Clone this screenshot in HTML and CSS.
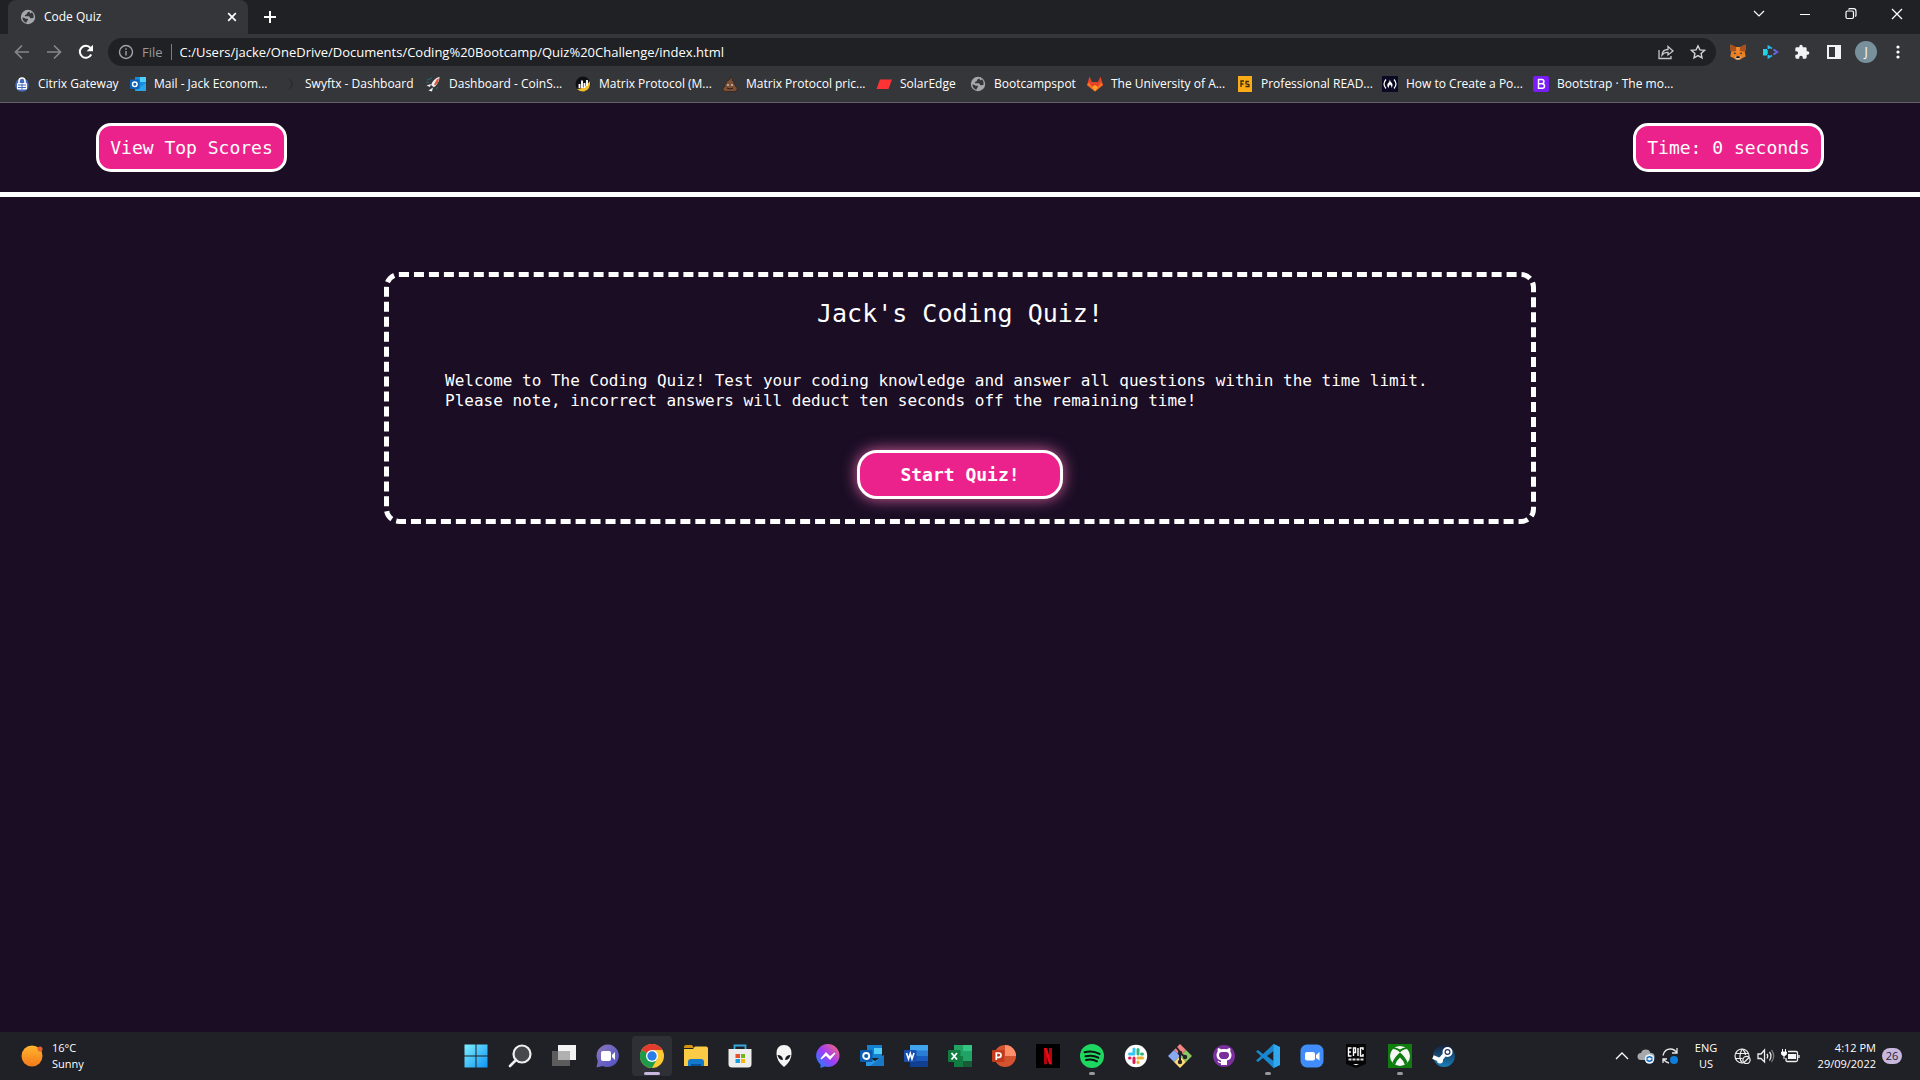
FILE: index.html
```html
<!DOCTYPE html>
<html lang="en">
<head>
<meta charset="utf-8">
<title>Code Quiz</title>
<link rel="stylesheet" href="styles.css">
</head>
<body>
<svg class="defs" width="0" height="0" aria-hidden="true">
  <defs>
    <linearGradient id="gWin" x1="0" y1="0" x2="1" y2="1"><stop offset="0" stop-color="#7ff0ff"/><stop offset="1" stop-color="#0d92f5"/></linearGradient>
    <linearGradient id="gChat" x1="0" y1="0" x2="1" y2="1"><stop offset="0" stop-color="#8f78b8"/><stop offset="1" stop-color="#4b50c8"/></linearGradient>
    <linearGradient id="gMsg" x1="0" y1="1" x2="1" y2="0"><stop offset="0" stop-color="#0a8bff"/><stop offset=".5" stop-color="#a03cf8"/><stop offset="1" stop-color="#ff6a6a"/></linearGradient>
    <linearGradient id="gSteam" x1="0" y1="0" x2="0" y2="1"><stop offset="0" stop-color="#16203c"/><stop offset="1" stop-color="#1a7fb8"/></linearGradient>
    <linearGradient id="gDash" x1="0" y1="0" x2="1" y2="0"><stop offset="0" stop-color="#22c8f0"/><stop offset="1" stop-color="#7a4ff0"/></linearGradient>
    <linearGradient id="gSun" x1="0" y1="0" x2="0" y2="1"><stop offset="0" stop-color="#ffb62e"/><stop offset="1" stop-color="#f47a1c"/></linearGradient>
    <symbol id="globe" viewBox="0 0 16 16"><circle cx="8" cy="8" r="7.200" fill="#a4a8ac"/><path d="M9.500 2.500q-2.500.5-2.500 2 0 1-1.500 1.200Q4.500 6 5 7.200h3.500q1.500.3 1.500 1.800 2 .5 3.800-.5Q14.200 5 12 3.200q-1 1.300-2 1z" fill="#35363a"/><path d="M2.300 8.500q2.200 0 3.200 1.300h2.300q.7.800-.3 1.700-1 .7-1 2.300Q3 13 2.300 8.500z" fill="#35363a"/></symbol>
  </defs>
</svg>

<header class="browser">
  <div class="tabstrip">
    <div class="tab">
      <svg class="fav" viewBox="0 0 16 16"><use href="#globe"/></svg>
      <span class="tab-title">Code Quiz</span>
      <button class="icon-btn tab-close" aria-label="Close tab"><svg width="10" height="10" viewBox="0 0 10 10"><path d="M1.200 1.200l7.600 7.600M8.800 1.200L1.200 8.800" stroke="#fff" stroke-width="1.700"/></svg></button>
    </div>
    <button class="icon-btn new-tab" aria-label="New tab"><svg width="14" height="14" viewBox="0 0 14 14"><path d="M7 1v12M1 7h12" stroke="#fff" stroke-width="2"/></svg></button>
    <div class="win-controls">
      <button class="icon-btn" aria-label="Search tabs"><svg width="12" height="8" viewBox="0 0 12 8"><path d="M1 1l5 5 5-5" fill="none" stroke="#fff" stroke-width="1.200"/></svg></button>
      <button class="icon-btn" aria-label="Minimise"><svg width="10" height="10" viewBox="0 0 10 10"><path d="M0 5.500h10" stroke="#fff"/></svg></button>
      <button class="icon-btn" aria-label="Restore"><svg width="12" height="12" viewBox="0 0 12 12" fill="none" stroke="#fff" stroke-width="1.200"><rect x="1" y="3" width="7.500" height="7.500" rx="1.500"/><path d="M3.500 1.500q.5-.8 1.500-.8h3.500Q11 .7 11 3.200V7q0 1-.8 1.500"/></svg></button>
      <button class="icon-btn" aria-label="Close"><svg width="12" height="12" viewBox="0 0 12 12"><path d="M1 1l10 10M11 1L1 11" stroke="#fff" stroke-width="1.300"/></svg></button>
    </div>
  </div>

  <div class="toolbar">
    <nav class="nav-btns">
      <button class="icon-btn" aria-label="Back"><svg width="16" height="16" viewBox="0 0 16 16" fill="none" stroke="#85878b" stroke-width="1.700"><path d="M15 8H2M8 1.500L1.500 8 8 14.500"/></svg></button>
      <button class="icon-btn" aria-label="Forward"><svg width="16" height="16" viewBox="0 0 16 16" fill="none" stroke="#85878b" stroke-width="1.700"><path d="M1 8h13M8 1.500L14.500 8 8 14.500"/></svg></button>
      <button class="icon-btn" aria-label="Reload"><svg width="16" height="16" viewBox="0 0 16 16"><path d="M13.200 10.500A6 6 0 1 1 12.500 4" fill="none" stroke="#fff" stroke-width="2"/><path d="M15 .8v6.400H8.600z" fill="#fff"/></svg></button>
    </nav>
    <div class="omnibox">
      <svg width="16" height="16" viewBox="0 0 16 16" fill="none" stroke="#a0a3a7" stroke-width="1.400"><circle cx="8" cy="8" r="6.500"/><path d="M8 7v4.500M8 4.300v1.500"/></svg>
      <label class="scheme" for="address">File</label>
      <input id="address" class="address" type="text" value="C:/Users/jacke/OneDrive/Documents/Coding%20Bootcamp/Quiz%20Challenge/index.html">
      <button class="icon-btn" aria-label="Share"><svg width="16" height="16" viewBox="0 0 16 16" fill="none" stroke="#c6c8cb" stroke-width="1.300"><path d="M1 6v8.500h12V12M4 11c.3-3.500 2.500-5.500 6-5.500V2.500L15 7l-5 4V8.300C7.500 8.200 5.500 9 4 11z"/></svg></button>
      <button class="icon-btn" aria-label="Bookmark"><svg width="16" height="16" viewBox="0 0 16 16"><path d="M8 1.800l1.900 4.100 4.500.5-3.300 3 .9 4.400L8 11.600l-4 2.200.9-4.400-3.300-3 4.500-.5z" fill="none" stroke="#d0d2d5" stroke-width="1.400"/></svg></button>
    </div>
    <div class="extensions">
      <button class="icon-btn" aria-label="MetaMask"><svg width="16" height="16" viewBox="0 0 16 16"><path d="M.5.500L5.500 3h5l5-2.500V6l-.7 2 .9 4.500-3.200 1.500-2.500 1.700H6L3.500 14 .3 12.500 1.200 8 .5 6z" fill="#ea8022"/><path d="M.5.500L6 3l.5 4-4.800.5L.5 6zM15.500.5L10 3l-.5 4 4.800.5L15.500 6z" fill="#a8501e"/><path d="M6 3h4l-.8 6H6.800z" fill="#f08a2a"/><path d="M3.800 8.300l2.700 1.200-2 .8zM12.200 8.300L9.500 9.500l2 .8z" fill="#233447"/><path d="M5 12.500l1.500 3h3l1.500-3z" fill="#d7c1b3"/><path d="M6.500 12.300h3l.3 1.700H6.200z" fill="#161616"/></svg></button>
      <button class="icon-btn" aria-label="Extension"><svg width="17" height="14" viewBox="0 0 17 14"><rect x="1" y="4" width="4" height="6.500" fill="#22d3e8"/><path d="M6.500 4V1.500L10 3.500M11.500 4.500L15.500 7l-4 2.500M10 10.500l-3.500 2V10" fill="none" stroke="url(#gDash)" stroke-width="1.800"/><path d="M5.500 5v4" stroke="#3a9cf0"/></svg></button>
      <button class="icon-btn" aria-label="Extensions"><svg width="16" height="16" viewBox="0 0 24 24"><path d="M20.500 11H19V7a2 2 0 0 0-2-2h-4V3.500a2.500 2.500 0 0 0-5 0V5H4a2 2 0 0 0-2 2v3.800h1.500a2.700 2.700 0 0 1 0 5.400H2V20a2 2 0 0 0 2 2h3.800v-1.500a2.700 2.700 0 0 1 5.400 0V22H17a2 2 0 0 0 2-2v-4h1.500a2.500 2.500 0 0 0 0-5z" fill="#f1f3f4"/></svg></button>
      <button class="icon-btn" aria-label="Side panel"><svg width="14" height="14" viewBox="0 0 14 14"><path d="M0 0h14v14H0zM2 2v10h6V2z" fill="#f1f3f4" fill-rule="evenodd"/></svg></button>
      <button class="icon-btn avatar" aria-label="Profile">J</button>
      <button class="icon-btn" aria-label="Menu"><svg width="4" height="14" viewBox="0 0 4 14" fill="#fff"><circle cx="2" cy="2" r="1.600"/><circle cx="2" cy="7" r="1.600"/><circle cx="2" cy="12" r="1.600"/></svg></button>
    </div>
  </div>

  <nav class="bookmarks">
    <a href="#"><svg class="fav" viewBox="0 0 16 16"><circle cx="8" cy="9" r="6.800" fill="#4668b8"/><path d="M5 7V5a3 3 0 0 1 6 0v2" fill="none" stroke="#fff" stroke-width="1.600"/><rect x="3" y="7" width="10" height="6.500" rx="1" fill="#fff"/><path d="M4 9h8M4 11.500h8M8 7.500v6" stroke="#4668b8"/></svg>Citrix Gateway</a>
    <a href="#"><svg class="fav" viewBox="0 0 16 16"><path d="M5 1h11v14H5z" fill="#1590df"/><path d="M10 1h6v5h-6z" fill="#50d0ff"/><path d="M16 7v8H5z" fill="#2ba5ea"/><rect y="3.500" width="9.500" height="9.500" rx="1" fill="#0a63b8"/><circle cx="4.800" cy="8.200" r="2.300" fill="none" stroke="#fff" stroke-width="1.500"/></svg>Mail - Jack Econom...</a>
    <a href="#"><svg class="fav" viewBox="0 0 16 16"><path d="M7 2q5 2 5 6t-5 6q3-3 3-6T7 2z" fill="#2b2d33"/></svg>Swyftx - Dashboard</a>
    <a href="#"><svg class="fav" viewBox="0 0 16 16"><path d="M2 4l5-2M1 7l3-1M11 13l2-2" stroke="#256a78"/><path d="M14.500.8Q8 3 6 9l3 2.200Q14.500 7 14.500.8z" fill="#eceff2"/><path d="M12 3l2-.5-1 4-3 3-1-1z" fill="#de5330"/><path d="M6 8L1.500 9.500 5 11zM8 11.500L7 15.500 3.500 14.500z" fill="#f2f2f2"/></svg>Dashboard - CoinS...</a>
    <a href="#"><svg class="fav" viewBox="0 0 16 16"><circle cx="8" cy="8" r="7.500" fill="#0d0f12"/><path d="M2 13Q9 13 15 5q1 9-6 10.500Q5 16 2 13z" fill="#f0bf2b"/><path d="M4.500 8v4M7 4.500V12M9.500 7v5M12 4v6" stroke="#fff" stroke-width="1.900"/></svg>Matrix Protocol (M...</a>
    <a href="#"><svg class="fav" viewBox="0 0 16 16"><path d="M8.500.5q2.500 2 1.500 4 2.500.5 2 3.500 2 .5 1.500 2.500 2.500 1 1.500 3.500-.5 1.500-3 1.500H3.500Q.5 15.500.8 13q.2-2 2.200-2.500-.8-2 1-3Q4 5 6.500 4.500 9 3 8.500.5z" fill="#7c5138" stroke="#302019" stroke-width=".7"/><circle cx="6" cy="9" r=".9" fill="#ccc"/><circle cx="10" cy="9" r=".9" fill="#ccc"/><path d="M5 12q3 2 6 0" fill="none" stroke="#2c1c14"/></svg>Matrix Protocol pric...</a>
    <a href="#"><svg class="fav" viewBox="0 0 16 16"><path d="M4 3.500h12L12.500 13H.5z" fill="#ff3333"/></svg>SolarEdge</a>
    <a href="#"><svg class="fav" viewBox="0 0 16 16"><use href="#globe"/></svg>Bootcampspot</a>
    <a href="#"><svg class="fav" viewBox="0 0 16 16"><path d="M2.500.5L5 6h6l2.500-5.500L16 9l-8 6.500L0 9z" fill="#e24329"/><path d="M0 9l2-3 6 9.500L14 6l2 3-8 6.500z" fill="#fc6d26"/><path d="M5 11l3-2 3 2-3 4.500z" fill="#fca326"/></svg>The University of A...</a>
    <a href="#"><svg class="fav" viewBox="0 0 16 16"><path d="M1 0h14v16H1z" fill="#fbab18"/><path d="M4 11V5h3M4 8h2.500M12 5.500H9v2.300l3 .7v2H8.500" fill="none" stroke="#3c2c0c" stroke-width="1.300"/></svg>Professional READ...</a>
    <a href="#"><svg class="fav" viewBox="0 0 16 16"><path d="M0 0h16v16H0z" fill="#0a0a23"/><path d="M4 3.500q-4 4.500 0 9M12 3.500q4 4.500 0 9" fill="none" stroke="#fff" stroke-width="1.200"/><path d="M8 3.500q0 2 1.800 3.500 1.700 2.500-.5 5Q10 9.500 8 8.500q-1.500 1-1.200 3.500-2.500-2-1-4.500Q7.500 6 8 3.500z" fill="#fff"/></svg>How to Create a Po...</a>
    <a href="#"><svg class="fav" viewBox="0 0 16 16"><rect width="16" height="16" rx="2" fill="#7a1cf5"/><path d="M5.500 3.500h3.300a2 2 0 0 1 0 4.200H5.500zM5.500 7.700h3.700a2.300 2.300 0 0 1 0 4.600H5.500z" fill="none" stroke="#fff" stroke-width="1.500"/></svg>Bootstrap · The mo...</a>
  </nav>
</header>

<main class="page">
  <div class="quiz-bar">
    <button class="pill">View Top Scores</button>
    <div class="pill">Time: 0 seconds</div>
  </div>
  <section class="quiz-card">
    <h1>Jack's Coding Quiz!</h1>
    <p>Welcome to The Coding Quiz! Test your coding knowledge and answer all questions within the time limit. Please note, incorrect answers will deduct ten seconds off the remaining time!</p>
    <button class="pill start">Start Quiz!</button>
  </section>
</main>

<footer class="taskbar">
  <div class="weather">
    <svg width="24" height="24" viewBox="0 0 24 24"><circle cx="12" cy="12" r="10.500" fill="url(#gSun)"/><circle cx="20" cy="5" r="2.500" fill="#e8622a"/></svg>
    <div><div>16°C</div><div>Sunny</div></div>
  </div>
  <div class="apps">
    <button aria-label="Start"><svg viewBox="0 0 24 24" fill="url(#gWin)"><path d="M.5.500h11v11H.5zM12.500.5h11v11h-11zM.5 12.500h11v11H.5zM12.500 12.500h11v11h-11z"/></svg></button>
    <button aria-label="Search"><svg viewBox="0 0 24 24"><circle cx="14" cy="10" r="8.500" fill="#46484c" stroke="#f0f0f0" stroke-width="2.200"/><path d="M8 16l-6 6" stroke="#f0f0f0" stroke-width="2.600" stroke-linecap="round"/></svg></button>
    <button aria-label="Task view"><svg viewBox="0 0 24 24"><path d="M6 1h18v15H6z" fill="#f3f3f3"/><path d="M0 7h18v15H0z" fill="#5c5c5c"/><path d="M6 7h12v9H6z" fill="#b0b0b0"/></svg></button>
    <button aria-label="Chat"><svg viewBox="0 0 24 24"><path d="M12 .5a11.300 11.300 0 1 1-5.500 21.400L.5 23.500 1.800 17A11.300 11.300 0 0 1 12 .5z" fill="url(#gChat)"/><rect x="5" y="7" width="10" height="10" rx="2" fill="#fff"/><path d="M16 11l3-3v8l-3-3z" fill="#fff"/></svg></button>
    <button class="active" aria-label="Chrome"><svg viewBox="0 0 24 24"><circle cx="12" cy="12" r="12" fill="#fcc934"/><path d="M12 12L1.600 6A12 12 0 0 1 22.400 6z" fill="#e33b2e"/><path d="M12 12L1.600 6A12 12 0 0 0 12 24l5-9z" fill="#1e9a4b"/><path d="M12 6h10.400L17.200 15z" fill="#fcc934"/><circle cx="12" cy="12" r="6" fill="#fff"/><circle cx="12" cy="12" r="4.700" fill="#2a7de9"/></svg></button>
    <button aria-label="File Explorer"><svg viewBox="0 0 24 24"><path d="M0 3q0-2 2-2h6l2 3H0z" fill="#d4930e"/><path d="M0 5h9l2-2.500h11q2 0 2 2V22H0z" fill="#fccb45"/><path d="M4 22v-4q0-3 3-3h10q3 0 3 3v4z" fill="#1478cc"/><path d="M7 20h10v2H7z" fill="#0a5299"/></svg></button>
    <button aria-label="Microsoft Store"><svg viewBox="0 0 24 24"><path d="M6.500 6V1.500h11V6" fill="none" stroke="#35a9e0" stroke-width="1.800"/><path d="M.5 5h23v15q0 3.500-3.500 3.500H4Q.5 23.500.5 20z" fill="#ededed"/><path d="M7.500 10H12v4H7.500z" fill="#e8512b"/><path d="M13 10h4v4h-4z" fill="#74b51c"/><path d="M7.500 15H12v4H7.500z" fill="#169fe0"/><path d="M13 15h4v4h-4z" fill="#fbb50c"/></svg></button>
    <button aria-label="Alienware"><svg viewBox="0 0 24 24"><path d="M12 1q7.500 0 7.500 8.500Q19.500 17 12 23 4.500 17 4.500 9.500 4.500 1 12 1z" fill="#f5f5f5"/><path d="M5.500 11q5 0 5.500 5-4.500 0-5.500-5zM18.500 11q-5 0-5.500 5 4.500 0 5.500-5z" fill="#17181b"/></svg></button>
    <button aria-label="Messenger"><svg viewBox="0 0 24 24"><path d="M12 0a11.500 11.500 0 1 1-3 22.600L4.500 24v-3.500A11.500 11.500 0 0 1 12 0z" fill="url(#gMsg)"/><path d="M5 15l5-6 4 4 5-4-5 6-4-4z" fill="#fff" stroke="#fff" stroke-width="1.200"/></svg></button>
    <button aria-label="Outlook"><svg viewBox="0 0 24 24"><path d="M7 1h15v13H7z" fill="#1380d0"/><path d="M14 4h8v6h-8z" fill="#52cdf8"/><path d="M24 11v11H6V12l9 5z" fill="#2a98e4"/><path d="M24 11L10 22h14z" fill="#1a79c6"/><rect y="6" width="12.500" height="12" rx="1" fill="#0a5dae"/><circle cx="6.200" cy="12" r="3" fill="none" stroke="#fff" stroke-width="1.900"/></svg></button>
    <button aria-label="Word"><svg viewBox="0 0 24 24"><path d="M6 1h18v22H6z" fill="#2b7cd3"/><path d="M6 1h18v5.500H6z" fill="#41a5ee"/><path d="M6 17h18v6H6z" fill="#103f91"/><path d="M6 12h18v5H6z" fill="#185abd"/><rect y="6" width="12.500" height="12" rx="1" fill="#174fb0"/><path d="M2.500 9l2 6 1.800-5.500L8 15l2-6" fill="none" stroke="#fff" stroke-width="1.600"/></svg></button>
    <button aria-label="Excel"><svg viewBox="0 0 24 24"><path d="M6 1h18v22H6z" fill="#21a366"/><path d="M15 1h9v6h-9z" fill="#33c481"/><path d="M6 12h9v11H6z" fill="#107c41"/><path d="M15 17h9v6h-9z" fill="#185c37"/><rect y="6" width="12.500" height="12" rx="1" fill="#107c41"/><path d="M3.500 9l5.500 6.500M9 9l-5.500 6.500" stroke="#fff" stroke-width="1.800"/></svg></button>
    <button aria-label="PowerPoint"><svg viewBox="0 0 24 24"><circle cx="13" cy="12" r="11" fill="#d35230"/><path d="M13 1a11 11 0 0 1 11 11H13z" fill="#ff8f6b"/><rect y="6" width="12.500" height="12" rx="1" fill="#c13b1b"/><path d="M4.300 16V9h2.500a2.200 2.200 0 0 1 0 4.400H4.300" fill="none" stroke="#fff" stroke-width="1.700"/></svg></button>
    <button aria-label="Netflix"><svg viewBox="0 0 24 24"><path d="M0 0h24v24H0z" fill="#000"/><path d="M8 4h3v16l-3 .5zM13 4h3v16.500l-3-.5z" fill="#b1060f"/><path d="M8 4h3l5 16.500-3-.5z" fill="#e50914"/></svg></button>
    <button class="running" aria-label="Spotify"><svg viewBox="0 0 24 24"><circle cx="12" cy="12" r="12" fill="#1ed760"/><path d="M4.500 8.300q8-2.300 15 1.600M5.500 12.300q7-1.800 12.800 1.400M6 16q6-1.300 11 1.300" fill="none" stroke="#111" stroke-width="2" stroke-linecap="round"/></svg></button>
    <button aria-label="Slack"><svg viewBox="0 0 24 24"><circle cx="12" cy="12" r="11.200" fill="#fff"/><g stroke-width="3" stroke-linecap="round"><path d="M10 5v4M5.500 10H10" stroke="#36c5f0"/><path d="M14 5.500V10M18.500 10h-1" stroke="#2eb67d"/><path d="M14 14h4.500M14 18v.5" stroke="#ecb22e"/><path d="M10 14v4.500M5.500 14H6" stroke="#e01e5a"/></g></svg></button>
    <button aria-label="Git"><svg viewBox="0 0 24 24"><path d="M12 0l6 6-6 6-6-6z" fill="#f28482"/><path d="M18 6l6 6-6 6-6-6z" fill="#8dc763"/><path d="M6 6l6 6-6 6-6-6z" fill="#88aaf0"/><path d="M12 12l6 6-6 6-6-6z" fill="#fbdc74"/><path d="M8 3l4 5v10M12 9l5 4" fill="none" stroke="#252229" stroke-width="2"/><circle cx="12" cy="9" r="2.200" fill="#252229"/><circle cx="17" cy="13" r="2.200" fill="#252229"/><circle cx="12" cy="18" r="2.200" fill="#252229"/></svg></button>
    <button aria-label="GitHub Desktop"><svg viewBox="0 0 24 24"><circle cx="12" cy="12" r="11" fill="#7b2e9e"/><path d="M9 21v-4.500Q4.500 15.500 4.500 11q0-2 1.200-3.500Q5.200 5.500 6 4q1.700.2 3.200 1.300 2.800-.6 5.600 0Q16.300 4.200 18 4q.8 1.500.3 3.500 1.200 1.500 1.200 3.500 0 4.500-4.500 5.500V21z" fill="#fff"/><path d="M10 15q-3-.8-3-4 0-3 3-3h4q3 0 3 3 0 3.200-3 4z" fill="#7b2e9e"/><path d="M9.500 18.500q-2.500.5-3.500-1.500" fill="none" stroke="#fff" stroke-width="1.200"/></svg></button>
    <button class="running" aria-label="Visual Studio Code"><svg viewBox="0 0 24 24"><path d="M17.500 0L24 3v18l-6.500 3L7 14l-5 4-2-1.500L5 12 0 7.500 2 6l5 4zM17.500 7L11 12l6.500 5z" fill="#1b86d0" fill-rule="evenodd"/><path d="M17.500 0L24 3v18l-6.500 3z" fill="#2fa8ee"/></svg></button>
    <button aria-label="Zoom"><svg viewBox="0 0 24 24"><rect x=".5" y=".5" width="23" height="23" rx="6.500" fill="#3f8cfa"/><rect x="5" y="8" width="10" height="8.500" rx="2" fill="#fff"/><path d="M16 11l3.500-3v8.500L16 14z" fill="#fff"/></svg></button>
    <button aria-label="Epic Games"><svg viewBox="0 0 24 24"><path d="M2 0h20v20l-10 4-10-4z" fill="#050505"/><path d="M7.500 4h-3v8h3M4.500 8h2.500M9.500 12V4h2v4.500h-2M14 4v8M19 6V4h-2.500v8H19v-2" fill="none" stroke="#fff" stroke-width="1.400"/><path d="M4.500 15.500h15" stroke="#ddd" stroke-width="2" stroke-dasharray="3 1"/><path d="M9 20l3 1.200 3-1.200z" fill="#fff"/></svg></button>
    <button class="running" aria-label="Xbox"><svg viewBox="0 0 24 24"><path d="M0 0h24v24H0z" fill="#107c10"/><circle cx="12" cy="12" r="10" fill="#f7f7f7"/><path d="M6 3.500Q9 3.500 12 5.500q3-2 6-2L19 5q-4 0-7 3.500Q9 5 5 5z" fill="#107c10"/><path d="M12 8.500Q17.500 13 19.500 18.500L17 21q-1.500-4.500-5-7.500-3.500 3-5 7.500l-2.500-2.500Q6.500 13 12 8.500z" fill="#107c10"/></svg></button>
    <button aria-label="Steam"><svg viewBox="0 0 24 24"><circle cx="12" cy="12" r="11" fill="url(#gSteam)"/><path d="M1 13l7 3 5-6" fill="none" stroke="#fff" stroke-width="4"/><circle cx="8" cy="16.500" r="3" fill="#fff"/><circle cx="15.500" cy="8" r="4" fill="#1f355c" stroke="#fff" stroke-width="2"/><circle cx="15.500" cy="8" r="1.800" fill="#fff"/></svg></button>
  </div>
  <div class="tray">
    <svg width="24" height="16" viewBox="0 0 24 16"><path d="M6 11l6-6 6 6" fill="none" stroke="#fff" stroke-width="1.300"/></svg>
    <svg width="24" height="16" viewBox="0 0 24 16"><path d="M7 12a3.500 3.500 0 0 1 0-7 5 5 0 0 1 9.500 0 3.500 3.500 0 0 1 1 7z" fill="#a6a8aa"/><circle cx="15.500" cy="11" r="4.800" fill="#e8f2fb"/><path d="M12.500 10.500q3-3.500 6 0M18.500 11.500q-3 3.500-6 0" fill="none" stroke="#0f68b8" stroke-width="1.500"/></svg>
    <svg width="24" height="16" viewBox="0 0 24 16"><path d="M5 7.500Q6.500 1 12.500 1q4 0 6.500 4M19 0v5h-5M11 15Q7.500 14.500 5.500 11M5 15v-4h4" fill="none" stroke="#e8e8e8" stroke-width="1.300"/><circle cx="16" cy="12" r="4" fill="#0e7ddb"/></svg>
    <div class="lang"><div>ENG</div><div>US</div></div>
    <svg width="24" height="16" viewBox="0 0 24 16" fill="none" stroke="#eee" stroke-width="1.200"><circle cx="12" cy="8" r="7"/><path d="M5.500 5.500h13M5.500 10.500h7M12.500 15Q7.500 10 12 1M12.500 1q3 3 3 6"/><circle cx="16.500" cy="12" r="3.600" fill="#212226"/><path d="M14 14.500l5-5"/></svg>
    <svg width="24" height="16" viewBox="0 0 24 16" fill="none" stroke="#eee" stroke-width="1.300"><path d="M4 6h3l3.500-4v12L7 10.500H4zM13 6q1.500 2 0 4.500M15.500 4q3 4 0 8.500"/><path d="M17.500 2q4.500 6 0 12" stroke="#777"/></svg>
    <svg width="24" height="16" viewBox="0 0 24 16"><path d="M10 6h8v5h-8z" fill="#f5f5f5"/><path d="M10 3.500h8q1.500 0 1.500 1.500v7q0 1.500-1.500 1.500h-8.500q-1.500 0-1.500-1.500v-2M21 7v3" fill="none" stroke="#eee" stroke-width="1.300"/><path d="M4.500 1v3M7.500 1v3M3.500 4h5v1.500q0 2-2.500 2t-2.500-2zM6 7v4" stroke="#fff" fill="#fff"/></svg>
    <div class="clock"><div>4:12 PM</div><div>29/09/2022</div></div>
    <span class="badge">26</span>
  </div>
</footer>
</body>
</html>
```

FILE: styles.css
```css
* { box-sizing: border-box; }

body {
  margin: 0;
  min-height: 100vh;
  display: flex;
  flex-direction: column;
  background: #1a0d24;
  color: #fff;
  font-family: "Open Sans", "Noto Sans", sans-serif;
  font-size: 12px;
  line-height: 16px;
}

.defs { position: absolute; }
svg { display: block; flex: none; }
button { font: inherit; color: inherit; }

.icon-btn {
  display: grid;
  place-items: center;
  width: 32px;
  height: 28px;
  padding: 0;
  border: 0;
  background: none;
}

.fav { width: 16px; height: 16px; }

/* Browser chrome */
.browser {
  background: #35363a;
  border-bottom: 1px solid #626266;
}

.tabstrip {
  display: flex;
  height: 34px;
  padding-left: 8px;
  background: #202124;
}

.tab {
  display: flex;
  align-items: center;
  width: 240px;
  padding-left: 12px;
  background: #35363a;
  border-radius: 8px 8px 0 0;
}

.tab-title { flex: 1; padding-left: 8px; }
.new-tab { width: 44px; height: 34px; }

.win-controls { display: flex; margin-left: auto; }
.win-controls .icon-btn { width: 46px; }

.toolbar {
  display: flex;
  align-items: center;
  padding: 4px 6px 0 6px;
}

.nav-btns { display: flex; padding-right: 6px; }

.omnibox {
  flex: 1;
  display: flex;
  align-items: center;
  height: 28px;
  padding: 0 2px 0 10px;
  border-radius: 14px;
  background: #202124;
  font-size: 13px;
}

.scheme {
  margin-left: 8px;
  padding-right: 8px;
  border-right: 1px solid #7b7d81;
  color: #96999d;
}

.address {
  flex: 1;
  min-width: 0;
  padding: 0 0 0 8px;
  border: 0;
  outline: 0;
  background: none;
  color: #fff;
  font: inherit;
}

.extensions { display: flex; align-items: center; padding-left: 6px; }

.extensions .avatar {
  width: 22px;
  height: 22px;
  margin: 0 5px;
  border-radius: 50%;
  background: #78909c;
}

.bookmarks {
  display: grid;
  grid-template-columns: 116px 151px 144px 150px 147px 154px 94px 117px 150px 145px 151px 150px;
  align-items: center;
  height: 36px;
  padding-left: 14px;
}

.bookmarks a {
  display: flex;
  align-items: center;
  gap: 8px;
  color: #fff;
  text-decoration: none;
  white-space: nowrap;
}

/* Quiz page */
.page {
  flex: 1;
  font-family: "DejaVu Sans Mono", "Liberation Mono", monospace;
}

.quiz-bar {
  display: flex;
  justify-content: space-between;
  padding: 20px 5%;
  border-bottom: 5px solid #fff;
}

.pill {
  min-width: 191px;
  padding: 10px;
  border: 3px solid #fff;
  border-radius: 15px;
  background: #ec228c;
  color: #fff;
  font-family: inherit;
  font-size: 18px;
  line-height: 23px;
  text-align: center;
}

.quiz-card {
  display: flex;
  flex-direction: column;
  align-items: center;
  width: 60%;
  margin: 75px auto 0;
  padding: 20px 56px;
  border: 5px dashed #fff;
  border-radius: 15px;
}

.quiz-card h1 {
  margin: 0;
  font-size: 25px;
  font-weight: 400;
  line-height: 34px;
}

.quiz-card p {
  align-self: stretch;
  margin: 40px 0 39px;
  font-size: 16px;
  line-height: 20px;
}

.start {
  padding: 10px 40px;
  border-radius: 20px;
  font-weight: 700;
  box-shadow: 0 0 15px #d9609f;
}

/* Taskbar */
.taskbar {
  display: grid;
  grid-template-columns: 1fr auto 1fr;
  align-items: center;
  height: 48px;
  background: #202126;
}

.weather {
  display: flex;
  align-items: center;
  gap: 8px;
  padding-left: 20px;
  font-size: 11px;
}

.apps { display: flex; gap: 4px; }

.apps button {
  display: grid;
  place-items: center;
  position: relative;
  width: 40px;
  height: 40px;
  padding: 0;
  border: 0;
  border-radius: 4px;
  background: none;
}

.apps svg { width: 24px; height: 24px; }
.apps .active { background: #2e3035; }

.apps .active::after,
.apps .running::after {
  content: "";
  position: absolute;
  bottom: 1px;
  width: 6px;
  height: 3px;
  border-radius: 2px;
  background: #96989b;
}

.apps .active::after { width: 16px; background: #c8b8de; }

.tray {
  display: flex;
  justify-content: flex-end;
  align-items: center;
  padding-right: 18px;
  font-size: 11px;
}

.lang { width: 48px; text-align: center; }
.clock { width: 74px; text-align: right; }

.badge {
  width: 20px;
  margin-left: 6px;
  border-radius: 8px;
  background: #c8b8de;
  color: #26222e;
  text-align: center;
}
```
